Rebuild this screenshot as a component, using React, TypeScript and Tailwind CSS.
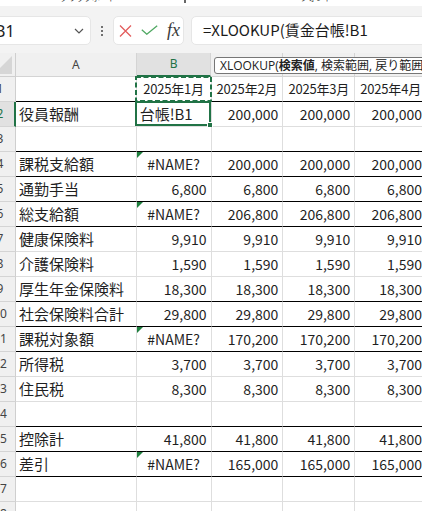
import React from "react";

const G = "#217346";

type RowDef = {
  n: number;
  a?: string;
  b?: string;
  kind?: "num" | "err" | "edit" | "date";
  vals?: string[];
  black: boolean;
};

const r3 = (v: string) => [v, v, v];

const rows: RowDef[] = [
  { n: 1, a: "", b: "2025年1月", kind: "date", vals: ["2025年2月", "2025年3月", "2025年4月"], black: true },
  { n: 2, a: "役員報酬", b: "台帳!B1", kind: "edit", vals: r3("200,000"), black: false },
  { n: 3, black: true },
  { n: 4, a: "課税支給額", b: "#NAME?", kind: "err", vals: r3("200,000"), black: true },
  { n: 5, a: "通勤手当", b: "6,800", kind: "num", vals: r3("6,800"), black: true },
  { n: 6, a: "総支給額", b: "#NAME?", kind: "err", vals: r3("206,800"), black: true },
  { n: 7, a: "健康保険料", b: "9,910", kind: "num", vals: r3("9,910"), black: false },
  { n: 8, a: "介護保険料", b: "1,590", kind: "num", vals: r3("1,590"), black: false },
  { n: 9, a: "厚生年金保険料", b: "18,300", kind: "num", vals: r3("18,300"), black: true },
  { n: 10, a: "社会保険料合計", b: "29,800", kind: "num", vals: r3("29,800"), black: true },
  { n: 11, a: "課税対象額", b: "#NAME?", kind: "err", vals: r3("170,200"), black: true },
  { n: 12, a: "所得税", b: "3,700", kind: "num", vals: r3("3,700"), black: false },
  { n: 13, a: "住民税", b: "8,300", kind: "num", vals: r3("8,300"), black: false },
  { n: 14, black: true },
  { n: 15, a: "控除計", b: "41,800", kind: "num", vals: r3("41,800"), black: true },
  { n: 16, a: "差引", b: "#NAME?", kind: "err", vals: r3("165,000"), black: true },
  { n: 17, black: false },
  { n: 18, black: false },
];

function ErrTri() {
  return (
    <div className="absolute left-0 top-0 w-0 h-0 border-t-[6px] border-r-[6px] border-t-[#1e7f3e] border-r-transparent" />
  );
}

function ValueCell({ v, kind }: { v?: string; kind?: RowDef["kind"] }) {
  let cls = "justify-end pr-[4px] text-[14px]";
  if (kind === "date") cls = "justify-center text-[13px] tracking-[-0.2px]";
  else if (kind === "err") cls = "justify-center text-[14px]";
  else if (kind === "edit") cls = "justify-start pl-[3px] text-[15px]";
  return (
    <div className={`w-full flex items-center ${cls} overflow-hidden whitespace-nowrap`}>{v}</div>
  );
}

export default function App() {
  return (
    <div className="w-[422px] h-[511px] overflow-hidden bg-white relative font-['Noto_Sans_CJK_JP',sans-serif] text-[#1f1f1f]">
      {/* ribbon remnants */}
      <div className="h-[6px] bg-white overflow-hidden flex text-[8px] leading-[10px] text-[#333]">
        <span className="ml-[60px] mt-[-7px]">クリップボード</span>
        <span className="ml-[68px] mt-[-7px] w-[2px] h-[10px] bg-[#666]" />
        <span className="ml-[114px] mt-[-7px]">フォント</span>
      </div>

      {/* toolbar */}
      <div className="h-[47px] bg-[#f3f3f3] flex items-start pt-[10px]">
        <div className="ml-[-20px] w-[111px] h-[29px] bg-white rounded-[5px] border border-[#e6e6e6] flex items-center justify-between pl-[14px] pr-[6px]">
          <span className="text-[16px] font-['Noto_Sans',sans-serif] text-[#222] leading-none">B1</span>
          <svg width="10" height="6" viewBox="0 0 10 6">
            <path d="M1 1 L5 5 L9 1" fill="none" stroke="#555" strokeWidth="1.2" />
          </svg>
        </div>
        <div className="w-[22px] h-[29px] flex flex-col items-center justify-center gap-[2px]">
          <span className="w-[2px] h-[2px] bg-[#444] rounded-full" />
          <span className="w-[2px] h-[2px] bg-[#444] rounded-full" />
          <span className="w-[2px] h-[2px] bg-[#444] rounded-full" />
        </div>
        <div className="w-[71px] h-[29px] bg-white rounded-[5px] border border-[#e6e6e6] flex items-center pl-[5px]">
          <svg width="13" height="12" viewBox="0 0 13 12">
            <path d="M1 0.5 L12 11.5 M12 0.5 L1 11.5" stroke="#e35d5d" strokeWidth="1.3" fill="none" />
          </svg>
          <svg width="17" height="10" viewBox="0 0 17 10" className="ml-[9px] mt-[-2px]">
            <path d="M0.8 4.8 L5.8 9.2 L16.2 0.8" stroke="#4fa862" strokeWidth="1.3" fill="none" />
          </svg>
          <span className="ml-[9px] font-['Liberation_Serif',serif] italic text-[18px] leading-none text-[#3a3a3a] mt-[-2px]">
            fx
          </span>
        </div>
        <div className="ml-[7px] mr-[-12px] flex-1 h-[29px] bg-white rounded-[5px] border border-[#e6e6e6] flex items-center pl-[11px] text-[15px] whitespace-nowrap overflow-hidden text-[#1a1a1a]">
          =XLOOKUP(賃金台帳!B1
        </div>
      </div>

      {/* grid */}
      <div className="ml-[-15px] w-[442px]">
        {/* header row */}
        <div className="flex h-[24px] relative text-[12px] font-['Noto_Sans',sans-serif] text-[#444]">
          <div className="w-[31px] bg-[#f0f0f0] border-r border-b border-[#cfcfcf] flex items-end justify-end pr-[3px] pb-[2px]">
            <svg width="18" height="18" viewBox="0 0 18 18">
              <path d="M18 0 L18 18 L0 18 Z" fill="#d6d6d6" />
            </svg>
          </div>
          <div className="w-[121px] bg-[#f0f0f0] border-r border-b border-[#d4d4d4] flex items-center justify-center">A</div>
          <div className="w-[75px] bg-[#e1e1e1] border-r border-[#d4d4d4] border-b-2 border-b-[#217346] flex items-center justify-center text-[#217346]">
            B
          </div>
          <div className="w-[72px] bg-[#f0f0f0] border-r border-b border-[#d4d4d4] flex items-center justify-center">C</div>
          <div className="w-[72px] bg-[#f0f0f0] border-r border-b border-[#d4d4d4] flex items-center justify-center">D</div>
          <div className="w-[72px] bg-[#f0f0f0] border-r border-b border-[#d4d4d4] flex items-center justify-center">E</div>
          {/* function tooltip */}
          <div className="absolute left-[229px] top-[4px] h-[17px] w-[240px] bg-white border border-[#767676] rounded-[3px] flex items-center pl-[5px] text-[12px] text-[#222] whitespace-nowrap overflow-hidden font-['Open_Sans','Noto_Sans_CJK_JP',sans-serif]">
            <span>XLOOKUP(</span>
            <span className="font-bold">検索値</span>
            <span>, 検索範囲, 戻り範囲</span>
          </div>
        </div>

        {rows.map((r) => {
          const bb = r.black ? "border-b-[#000]" : "border-b-[#dedede]";
          const sel = r.n === 2;
          return (
            <div key={r.n} className="flex h-[25px] text-[15px]">
              <div
                className={`w-[31px] border-b border-[#d4d4d4] flex items-center justify-center text-[12px] font-['Noto_Sans',sans-serif] ${
                  sel ? "bg-[#e1e1e1] text-[#217346] border-r-2 border-r-[#217346]" : "bg-[#f0f0f0] text-[#444] border-r border-r-[#cfcfcf]"
                }`}
              >
                <span className={sel ? "ml-[1px]" : ""}>{r.n}</span>
              </div>
              <div className={`w-[121px] border-r border-r-[#dedede] border-b ${bb} flex items-center pl-[3px] whitespace-nowrap overflow-hidden`}>
                {r.a}
              </div>
              <div className={`w-[75px] border-r border-r-[#dedede] border-b ${bb} relative flex`}>
                <ValueCell v={r.b} kind={r.kind} />
                {r.kind === "err" && <ErrTri />}
                {r.n === 1 && (
                  <svg className="absolute left-[-2px] top-[-1px]" width="77" height="26" viewBox="0 0 77 26">
                    <rect x="1" y="1" width="75" height="24" fill="none" stroke={G} strokeWidth="2" strokeDasharray="5 2.5" />
                  </svg>
                )}
                {r.n === 2 && (
                  <div className="absolute left-[-2px] top-[-1px] right-0 bottom-0 border-2 border-[#217346]">
                    <div className="absolute right-[-4px] bottom-[-4px] w-[6px] h-[6px] bg-[#217346] border border-white" />
                  </div>
                )}
              </div>
              {[0, 1, 2].map((i) => (
                <div key={i} className={`w-[72px] border-r border-r-[#dedede] border-b ${bb} flex`}>
                  <ValueCell
                    v={r.vals ? r.vals[i] : undefined}
                    kind={r.kind === "edit" || r.kind === "err" ? "num" : r.kind}
                  />
                </div>
              ))}
            </div>
          );
        })}
      </div>
    </div>
  );
}
